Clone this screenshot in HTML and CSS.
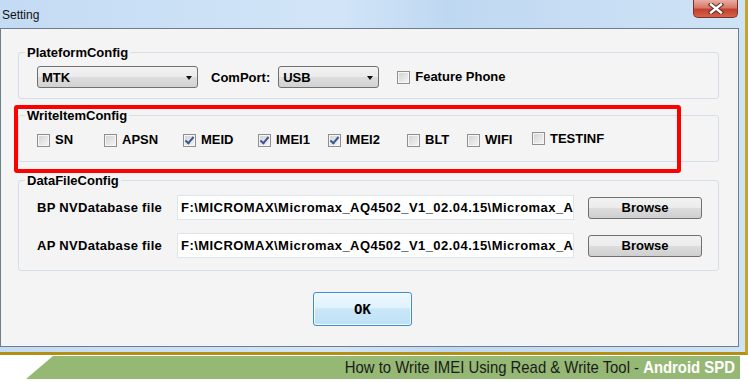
FILE: index.html
```html
<!DOCTYPE html>
<html lang="en">
<head>
  <meta charset="UTF-8">
  <meta name="viewport" content="width=device-width, initial-scale=1.0">
  <title>Setting</title>
  <link rel="stylesheet" href="styles.css">
</head>
<body>
<div class="window">
  <div class="titlebar">
    <span class="title">Setting</span>
    <span class="close-btn">
      <svg width="16" height="11" viewBox="0 0 16 11">
        <path d="M3 1.5 L13 9.5 M13 1.5 L3 9.5" stroke="#5b2a24" stroke-width="4.4" stroke-linecap="square" fill="none"></path>
        <path d="M3 1.5 L13 9.5 M13 1.5 L3 9.5" stroke="#ffffff" stroke-width="2.4" stroke-linecap="square" fill="none"></path>
      </svg>
    </span>
  </div>

  <div class="client">
    <fieldset class="group">
      <legend>PlateformConfig</legend>
      <div class="platform-row">
        <div class="combo combo-platform"><span>MTK</span><span class="combo-arrow"></span></div>
        <span class="port-label">ComPort:</span>
        <div class="combo combo-port"><span>USB</span><span class="combo-arrow"></span></div>
        <label class="check check-feature"><span class="box"></span>Feature Phone</label>
      </div>
    </fieldset>

    <fieldset class="group group-items">
      <legend>WriteItemConfig</legend>
      <div class="items-row">
        <label class="check"><span class="box"></span>SN</label>
        <label class="check"><span class="box"></span>APSN</label>
        <label class="check"><span class="box checked"></span>MEID</label>
        <label class="check"><span class="box checked"></span>IMEI1</label>
        <label class="check"><span class="box checked"></span>IMEI2</label>
        <label class="check"><span class="box"></span>BLT</label>
        <label class="check"><span class="box"></span>WIFI</label>
        <label class="check check-raised"><span class="box"></span>TESTINF</label>
      </div>
    </fieldset>

    <fieldset class="group group-data">
      <legend>DataFileConfig</legend>
      <div class="file-row">
        <span class="file-label">BP NVDatabase file</span>
        <div class="file-path">F:\MICROMAX\Micromax_AQ4502_V1_02.04.15\Micromax_A</div>
        <button class="btn">Browse</button>
      </div>
      <div class="file-row">
        <span class="file-label">AP NVDatabase file</span>
        <div class="file-path">F:\MICROMAX\Micromax_AQ4502_V1_02.04.15\Micromax_A</div>
        <button class="btn">Browse</button>
      </div>
    </fieldset>

    <div class="actions">
      <button class="btn-ok">OK</button>
    </div>
  </div>
</div>

<div class="highlight"></div>

<div class="banner"><span class="banner-text">How to Write IMEI Using Read &amp; Write Tool - <b>Android SPD</b></span></div>
</body>
</html>
```

FILE: styles.css
```css
body {
  margin: 0;
  padding: 0;
  width: 748px;
  height: 382px;
  position: relative;
  background-color: #ffffff;
  font-family: 'Liberation Sans', Arial, sans-serif;
  color: #000;
  overflow: hidden;
}

.window {
  width: 745px;
  padding-bottom: 5px;
  background: linear-gradient(to right, #c3dbf3, #d2e5f8 45%, #bfd8f1 60%, #cfe3f6);
  border-right: 3px solid #c9a323;
  border-bottom: 3px solid #b48f12;
}

.titlebar {
  height: 28px;
  display: flex;
  justify-content: space-between;
  align-items: flex-start;
}

.title {
  font-size: 12px;
  line-height: 14px;
  margin: 8px 0 0 2px;
  color: #111;
}

.close-btn {
  width: 45px;
  height: 18px;
  margin-right: 7px;
  box-sizing: border-box;
  display: flex;
  align-items: center;
  justify-content: center;
  border: 1px solid #7d3025;
  border-top: none;
  border-radius: 0 0 5px 5px;
  background: linear-gradient(#e9aea3, #d87868 45%, #c4412d 55%, #d3624c);
}

.client {
  width: 739px;
  height: 319px;
  box-sizing: border-box;
  border: 1px solid #6e7e8f;
  background-color: #f4f4f4;
  padding-top: 16px;
}

.group {
  margin: 0 19px 0 17px;
  padding: 6px 10px 10px 6px;
  border: 1px solid #d6dee7;
  border-radius: 3px;
  min-width: 0;
}

.group legend {
  padding: 0 2px;
  font-size: 13px;
  line-height: 15px;
  font-weight: bold;
}

.group-items {
  margin-top: 9px;
  padding-top: 9px;
  padding-bottom: 13px;
}

.group-data {
  margin-top: 11px;
  padding-top: 7px;
  padding-bottom: 12px;
}

/* platform row */
.platform-row {
  display: flex;
  align-items: center;
  height: 22px;
  padding-left: 12px;
  font-size: 13px;
  font-weight: bold;
}

.combo {
  height: 22px;
  box-sizing: border-box;
  display: flex;
  align-items: center;
  justify-content: space-between;
  padding: 0 5px 0 4px;
  border: 1px solid #707070;
  border-radius: 3px;
  background: linear-gradient(#f2f2f2, #ebebeb 50%, #dddddd 51%, #d2d2d2);
}

.combo-platform {
  width: 161px;
}

.combo-port {
  width: 101px;
  margin-left: 8px;
}

.combo-arrow {
  width: 0;
  height: 0;
  margin-top: 2px;
  border-left: 3.5px solid transparent;
  border-right: 3.5px solid transparent;
  border-top: 4px solid #111;
}

.port-label {
  margin-left: 13px;
}

.check {
  display: flex;
  align-items: center;
  font-size: 13px;
  font-weight: bold;
  line-height: 16px;
  white-space: nowrap;
}

.check-feature {
  margin-left: 18px;
}

.box {
  width: 13px;
  height: 13px;
  box-sizing: border-box;
  margin-right: 5px;
  border: 1px solid #8f8f8f;
  box-shadow: inset 0 0 0 1px #f6f6f6;
  background: linear-gradient(135deg, #cfd1d4, #f6f6f6);
  position: relative;
}

.box.checked::after {
  content: "";
  position: absolute;
  left: 3px;
  top: 0px;
  width: 3px;
  height: 7px;
  border-right: 2px solid #3e5694;
  border-bottom: 2px solid #3e5694;
  transform: rotate(40deg);
}

/* write items */
.items-row {
  display: grid;
  grid-template-columns: 67px 79px 75px 70px 79px 60px 65px auto;
  align-items: center;
  height: 16px;
  padding-left: 12px;
}

.check-raised {
  margin-top: -3px;
}

/* data files */
.file-row {
  display: flex;
  align-items: center;
  padding-left: 12px;
  font-size: 13px;
  font-weight: bold;
}

.file-row + .file-row {
  margin-top: 13px;
}

.file-label {
  width: 140px;
  letter-spacing: 0.3px;
}

.file-path {
  width: 397px;
  height: 25px;
  box-sizing: border-box;
  padding: 0 3px;
  line-height: 23px;
  border: 1px solid #dde4ec;
  background-color: #ffffff;
  letter-spacing: 0.45px;
  white-space: nowrap;
  overflow: hidden;
}

.btn {
  width: 114px;
  height: 22px;
  margin-left: 14px;
  padding: 0;
  border: 1px solid #707070;
  border-radius: 3px;
  background: linear-gradient(#f2f2f2, #ebebeb 50%, #dddddd 51%, #cfcfcf);
  font-family: inherit;
  font-size: 13px;
  font-weight: bold;
  color: #000;
}

.actions {
  display: flex;
  justify-content: center;
  margin-top: 21px;
  padding-right: 14px;
}

.btn-ok {
  width: 99px;
  height: 34px;
  padding: 0;
  border: 1px solid #3c8fcf;
  border-radius: 3px;
  box-shadow: inset 0 0 0 1px #f4fbff;
  background: linear-gradient(#eef8fe, #e1f2fc 45%, #c9e7f8 50%, #bfe1f5);
  font-family: 'DejaVu Sans Mono', 'Liberation Mono', monospace;
  font-size: 14px;
  font-weight: bold;
  color: #000;
}

/* red annotation box over the screenshot */
.highlight {
  position: absolute;
  left: 14px;
  top: 105px;
  width: 667px;
  height: 68px;
  box-sizing: border-box;
  border: 4px solid #ff0000;
  border-radius: 3px;
}

.banner {
  margin: 1px 0 0 26px;
  width: 714px;
  height: 23px;
  box-sizing: border-box;
  padding-right: 5px;
  display: flex;
  justify-content: flex-end;
  background-color: #95b874;
  clip-path: polygon(27px 0, 100% 0, 100% 100%, 0 100%);
  white-space: nowrap;
}

.banner-text {
  display: inline-block;
  transform: scaleX(0.875);
  transform-origin: right center;
  font-family: 'Liberation Sans', sans-serif;
  font-size: 17px;
  line-height: 23px;
  color: #1b1b1b;
}

.banner b {
  color: #ffffff;
}
```
